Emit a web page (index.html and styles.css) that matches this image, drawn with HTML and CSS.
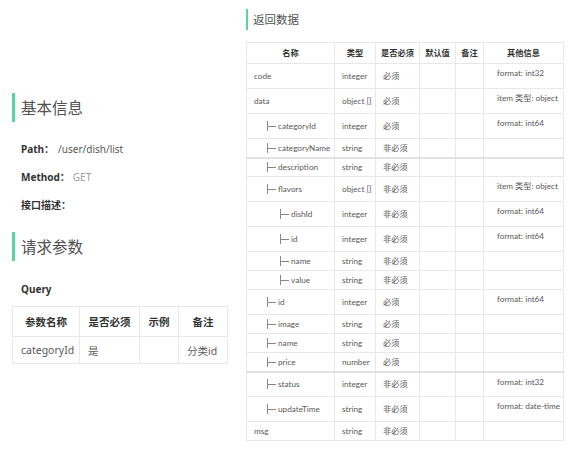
FILE: index.html
```html
<!DOCTYPE html>
<html lang="zh-CN">
<head>
<meta charset="utf-8">
<title>接口详情</title>
<link rel="stylesheet" href="styles.css">
</head>
<body>
<div class="page">
  <div class="left">
    <h2 class="sec-title big">基本信息</h2>
    <div class="kv"><b class="k">Path：</b><span class="v">/user/dish/list</span></div>
    <div class="kv"><b class="k">Method：</b><span class="v method">GET</span></div>
    <div class="kv"><b class="k">接口描述：</b></div>
    <h2 class="sec-title big second">请求参数</h2>
    <h3 class="sub">Query</h3>
    <table class="qtable">
      <colgroup><col class="qc1"><col class="qc2"><col class="qc3"><col class="qc4"></colgroup>
      <thead>
        <tr><th>参数名称</th><th>是否必须</th><th>示例</th><th>备注</th></tr>
      </thead>
      <tbody>
        <tr><td>categoryId</td><td>是</td><td></td><td>分类id</td></tr>
      </tbody>
    </table>
  </div>
  <div class="right">
    <h2 class="sec-title small">返回数据</h2>
    <table class="rtable">
      <colgroup><col class="c1"><col class="c2"><col class="c3"><col class="c4"><col class="c5"><col class="c6"></colgroup>
      <thead>
        <tr><th>名称</th><th>类型</th><th>是否必须</th><th>默认值</th><th>备注</th><th>其他信息</th></tr>
      </thead>
      <tbody>
        <tr class="tall"><td>code</td><td>integer</td><td>必须</td><td></td><td></td><td class="info">format: int32</td></tr>
        <tr class="tall"><td>data</td><td>object []</td><td>必须</td><td></td><td></td><td class="info">item 类型: object</td></tr>
        <tr class="tall"><td><span class="tree l1"></span>categoryId</td><td>integer</td><td>必须</td><td></td><td></td><td class="info">format: int64</td></tr>
        <tr class="short"><td><span class="tree l1"></span>categoryName</td><td>string</td><td>非必须</td><td></td><td></td><td></td></tr>
        <tr class="short thick"><td><span class="tree l1"></span>description</td><td>string</td><td>非必须</td><td></td><td></td><td></td></tr>
        <tr class="tall"><td><span class="tree l1"></span>flavors</td><td>object []</td><td>非必须</td><td></td><td></td><td class="info">item 类型: object</td></tr>
        <tr class="tall"><td><span class="tree l2"></span>dishId</td><td>integer</td><td>非必须</td><td></td><td></td><td class="info">format: int64</td></tr>
        <tr class="tall"><td><span class="tree l2"></span>id</td><td>integer</td><td>非必须</td><td></td><td></td><td class="info">format: int64</td></tr>
        <tr class="short"><td><span class="tree l2"></span>name</td><td>string</td><td>非必须</td><td></td><td></td><td></td></tr>
        <tr class="short"><td><span class="tree l2"></span>value</td><td>string</td><td>非必须</td><td></td><td></td><td></td></tr>
        <tr class="tall"><td><span class="tree l1"></span>id</td><td>integer</td><td>必须</td><td></td><td></td><td class="info">format: int64</td></tr>
        <tr class="short"><td><span class="tree l1"></span>image</td><td>string</td><td>必须</td><td></td><td></td><td></td></tr>
        <tr class="short"><td><span class="tree l1"></span>name</td><td>string</td><td>必须</td><td></td><td></td><td></td></tr>
        <tr class="short"><td><span class="tree l1"></span>price</td><td>number</td><td>必须</td><td></td><td></td><td></td></tr>
        <tr class="tall thick"><td><span class="tree l1"></span>status</td><td>integer</td><td>非必须</td><td></td><td></td><td class="info">format: int32</td></tr>
        <tr class="tall"><td><span class="tree l1"></span>updateTime</td><td>string</td><td>非必须</td><td></td><td></td><td class="info">format: date-time</td></tr>
        <tr class="short"><td>msg</td><td>string</td><td>非必须</td><td></td><td></td><td></td></tr>
      </tbody>
    </table>
  </div>
</div>
</body>
</html>
```

FILE: styles.css
```css
html, body {
  margin: 0;
  padding: 0;
  background: #ffffff;
}
body {
  font-family: "Noto Sans", "Noto Sans CJK SC", sans-serif;
  color: #595959;
}
.page {
  display: flex;
  align-items: flex-start;
}
.left {
  width: 234px;
  padding-left: 12px;
  padding-top: 93px;
}
.right {
  width: 318px;
  padding-top: 9px;
}
.sec-title {
  margin: 0;
  font-weight: normal;
  color: #505050;
  font-family: "Noto Sans CJK SC", sans-serif;
}
.sec-title.big {
  border-left: 3px solid #5cd49d;
  padding-left: 6px;
  height: 29px;
  line-height: 29px;
  font-size: 15.5px;
  margin-bottom: 13px;
}
.sec-title.big.second {
  margin-top: 13px;
  margin-bottom: 16px;
}
.sec-title.small {
  border-left: 2px solid #5cd49d;
  padding-left: 5px;
  height: 21px;
  line-height: 21px;
  font-size: 11.5px;
  margin-bottom: 12px;
}
.kv {
  height: 28px;
  line-height: 28px;
  font-size: 10px;
  padding-left: 9px;
}
.kv .k {
  color: #333333;
  font-weight: 700;
}
.kv .v {
  margin-left: 4px;
  color: #595959;
}
.kv .method {
  margin-left: 3px;
  color: #a0a0a0;
}
.sub {
  margin: 0 0 5px 9px;
  font-size: 10px;
  line-height: 24px;
  height: 24px;
  color: #333333;
  font-weight: 700;
}
.qtable {
  border-collapse: collapse;
  table-layout: fixed;
  width: 215px;
  font-size: 10.5px;
}
.qc1 { width: 67px; }
.qc2 { width: 60px; }
.qc3 { width: 39px; }
.qc4 { width: 49px; }
.qtable th, .qtable td {
  border: 1px solid #e8e8e8;
  padding: 0 0 0 8px;
  text-align: left;
  white-space: nowrap;
  overflow: hidden;
}
.qtable th {
  height: 29px;
  text-align: center;
  padding: 0;
  color: #333333;
  font-weight: 700;
}
.qtable td {
  height: 26px;
  color: #595959;
}
.rtable {
  border-collapse: collapse;
  table-layout: fixed;
  width: 317px;
  font-family: "Lato", "Noto Sans CJK SC", sans-serif;
  font-size: 8.2px;
}
.c1 { width: 88px; }
.c2 { width: 41px; }
.c3 { width: 44px; }
.c4 { width: 36px; }
.c5 { width: 28px; }
.c6 { width: 80px; }
.rtable th, .rtable td {
  border: 1px solid #e8e8e8;
  padding: 0 0 0 7px;
  text-align: left;
  white-space: nowrap;
  overflow: hidden;
  vertical-align: middle;
  line-height: 11px;
}
.rtable th {
  height: 20px;
  padding: 0;
  text-align: center;
  color: #333333;
  font-weight: 700;
}
.rtable tr.tall td { height: 24px; }
.rtable tr.short td { height: 18px; }
.rtable tr.thick td { border-top: 2px solid #e2e2e2; }
.rtable tr.tall.thick td { height: 23px; }
.rtable tr.short.thick td { height: 17px; }
.rtable td.info {
  vertical-align: top;
  padding-top: 4px;
  padding-left: 13px;
}
.rtable tr.tall td.info { height: 20px; }
.rtable tr.tall.thick td.info { height: 19px; }
.tree {
  display: inline-block;
  width: 8px;
  height: 10px;
  margin-right: 2px;
  vertical-align: -2px;
  border-left: 1px solid #888888;
  background: linear-gradient(#888888, #888888) no-repeat 0 5px / 100% 1px;
}
.tree.l1 { margin-left: 13px; }
.tree.l2 { margin-left: 26px; }
```
